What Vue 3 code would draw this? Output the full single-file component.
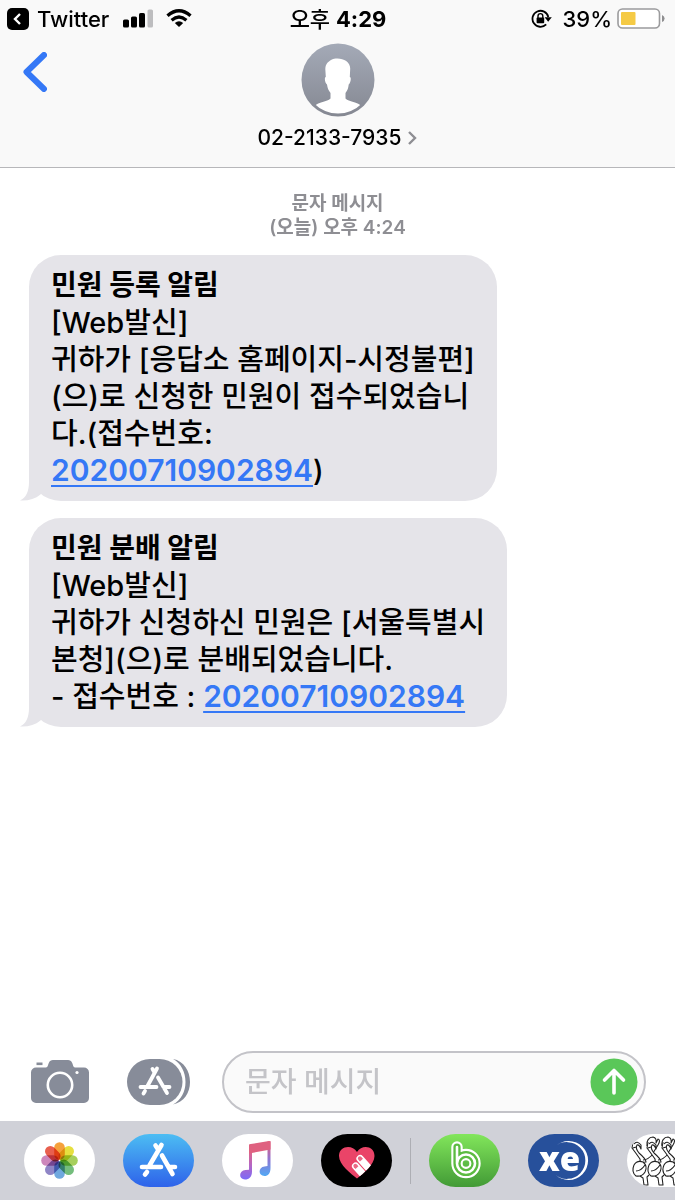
<template>
  <div class="phone">
    <header class="top">
      <div class="status">
        <div class="status-left">
          <a class="return-link" href="#">
            <svg width="22" height="22" viewBox="0 0 22 22" aria-hidden="true">
              <rect width="22" height="22" rx="5" fill="#000" />
              <path d="M13 6L8 11l5 5" fill="none" stroke="#fff" stroke-width="2.4" />
            </svg>
            <span>Twitter</span>
          </a>
          <svg class="signal" width="31" height="19" viewBox="0 0 31 19" aria-hidden="true">
            <rect x="0" y="10.5" width="6" height="8" rx="1.6" />
            <rect x="8" y="7.5" width="6" height="11" rx="1.6" />
            <rect x="16" y="4" width="6" height="14.5" rx="1.6" />
            <rect x="24.5" y="0.5" width="5.5" height="18" rx="1.6" fill="#bdbdbf" />
          </svg>
          <svg width="26" height="19" viewBox="0 0 26 19" fill="none" stroke="#000" aria-hidden="true">
            <path d="M1.5 6.8Q13-3.2 24.5 6.8" stroke-width="3.4" />
            <path d="M5.6 11.2Q13 4.8 20.4 11.2" stroke-width="3.2" />
            <path d="M13 18L8.8 14Q13 10.6 17.2 14Z" fill="#000" stroke="none" />
          </svg>
        </div>
        <time class="clock">오후 <b>4:29</b></time>
        <div class="status-right">
          <svg width="21" height="20" viewBox="0 0 21 20" aria-hidden="true">
            <path d="M15.2 15.4A8 8 0 1 1 17.3 8" fill="none" stroke="#000" stroke-width="1.8" />
            <path d="M13.6 8.2h7.2l-3.6 4.6z" />
            <rect x="5.6" y="8.6" width="7.6" height="5.6" rx="0.8" />
            <path d="M7 9V7a2.400 2.400 0 0 1 4.800 0v2" fill="none" stroke="#000" stroke-width="1.4" />
          </svg>
          <span class="percent">39%</span>
          <svg width="48" height="21" viewBox="0 0 48 21" aria-hidden="true">
            <rect x="1" y="1" width="41.5" height="19" rx="4.5" fill="#fff" stroke="#9b9b9d" stroke-width="1.6" />
            <rect x="4" y="4" width="14.5" height="13" rx="1" fill="#f5ca45" />
            <path d="M45 7q2.600 1 2.600 3.500T45 14z" fill="#8e8e90" />
          </svg>
        </div>
      </div>

      <nav class="nav">
        <button class="back" type="button" aria-label="뒤로">
          <svg width="24" height="40" viewBox="0 0 24 40" aria-hidden="true">
            <path d="M21 3L3.500 20 21 37" fill="none" stroke="#3578f6" stroke-width="6" stroke-linecap="round" stroke-linejoin="round" />
          </svg>
        </button>
        <button class="contact" type="button">
          <svg width="74" height="74" viewBox="0 0 74 74" aria-hidden="true">
            <defs>
              <linearGradient id="avatarBg" x1="0" y1="0" x2="0" y2="1">
                <stop offset="0" stop-color="#a4aab7" />
                <stop offset="1" stop-color="#858892" />
              </linearGradient>
              <clipPath id="avatarClip"><circle cx="37" cy="37" r="33.5" /></clipPath>
            </defs>
            <circle cx="37" cy="37" r="36.5" fill="url(#avatarBg)" />
            <path
              clip-path="url(#avatarClip)"
              fill="#fff"
              d="M36.500 15.500C43 15.500 49.500 19 49.200 26L48.800 34C50.500 34 49.800 40 47.700 41.500C47.300 45 46.500 47.500 44.500 50V55.500C48 59 56 58.500 62 64V74H12V64C18 58.500 26 59 29.500 55.500V50C27.500 47.500 26.500 45 26 41.500C24 40 23 34 24.800 34L24.300 26C24.500 20 28 18.500 30 17C32 15.800 34 15.500 36.500 15.500Z"
            />
          </svg>
          <span class="number">
            02-2133-7935
            <svg width="10" height="14" viewBox="0 0 10 14" aria-hidden="true">
              <path d="M2 1l6 6-6 6" fill="none" stroke="#8e8e93" stroke-width="2.4" />
            </svg>
          </span>
        </button>
      </nav>
    </header>

    <main class="thread">
      <p class="stamp">문자 메시지<br />(오늘) 오후 4:24</p>

      <div class="messages">
        <article v-for="(msg, i) in messages" :key="i" class="bubble">
          <h2 class="subject">{{ msg.subject }}</h2>
          <p v-for="(line, j) in msg.lines" :key="j" class="line">{{ line.before }}<a v-if="line.link" href="#">{{ line.link }}</a>{{ line.after }}</p>
          <svg class="tail" width="24" height="34" viewBox="0 0 24 34" aria-hidden="true">
            <path d="M9 0V15C9 24 6 31 0 33.500C8 34 15 32 20.500 27.500L24 20V0Z" fill="#e5e4e9" />
          </svg>
        </article>
      </div>
    </main>

    <footer>
      <form class="composer" @submit.prevent="draft = ''">
        <button class="tool" type="button" aria-label="카메라">
          <svg width="58" height="44" viewBox="0 0 58 44" aria-hidden="true">
            <path d="M5.500 2.500h6v2.600h-6z" fill="#878c99" />
            <path d="M5 7.500h9c3 0 2.500-1.500 3.800-4.500C18.800.8 20 0 22 0h15c2 0 3.200.8 4.200 3 1.300 3 .8 4.500 3.800 4.500h8a5 5 0 0 1 5 5V38a5 5 0 0 1-5 5H5a5 5 0 0 1-5-5V12.500a5 5 0 0 1 5-5z" fill="#878c99" />
            <circle cx="29" cy="25" r="12.2" fill="none" stroke="#fff" stroke-width="2.6" />
            <circle cx="46" cy="12.5" r="1.6" fill="#fff" />
          </svg>
        </button>
        <button class="tool" type="button" aria-label="앱">
          <svg width="64" height="48" viewBox="0 0 64 48" aria-hidden="true">
            <path d="M46 1C57 3 63 13 63 24S57 44 46 46.500C54 42 58.500 34 58.500 24S54 5.500 46 1z" fill="#878c99" />
            <rect x="0" y="1" width="55.5" height="46" rx="23" fill="#878c99" />
            <path d="M25.500 11l2 3.500M30 10.500L20.500 28M13.500 29h16M36.500 29h6M31 19.500l9 15.500M18 33l-1.500 2.500" fill="none" stroke="#fff" stroke-width="3.8" stroke-linecap="round" />
          </svg>
        </button>
        <div class="field">
          <input v-model="draft" type="text" placeholder="문자 메시지" aria-label="문자 메시지" />
          <button class="send" type="submit" aria-label="보내기">
            <svg width="48" height="48" viewBox="0 0 48 48" aria-hidden="true">
              <circle cx="24" cy="24" r="23.5" fill="#5ac759" />
              <path d="M24 35V13M14.500 22L24 12.500 33.500 22" fill="none" stroke="#fff" stroke-width="3.6" stroke-linecap="round" stroke-linejoin="round" />
            </svg>
          </button>
        </div>
      </form>

      <div class="apps">
        <button class="app white" type="button" aria-label="사진">
          <svg viewBox="0 0 71 53" aria-hidden="true">
            <g class="petals" transform="translate(35.5 26.5)">
              <rect v-for="(c, i) in petals" :key="c" x="-5.3" y="-18.3" width="10.6" height="17.6" rx="5.3" :fill="c" :transform="`rotate(${i * 45})`" />
            </g>
          </svg>
        </button>
        <button class="app store" type="button" aria-label="App Store">
          <svg viewBox="0 0 71 53" aria-hidden="true">
            <path d="M32.500 11.500l3 4.500M38.500 11L26.500 31.500M19 33h19M47 33h5M39 21.500L49.500 40M24 38l-2 2.500" fill="none" stroke="#fff" stroke-width="4.6" stroke-linecap="round" />
          </svg>
        </button>
        <button class="app white" type="button" aria-label="음악">
          <svg viewBox="0 0 71 53" aria-hidden="true">
            <defs>
              <linearGradient id="noteLeft" x1="0" y1="0" x2="0" y2="1">
                <stop offset="0.15" stop-color="#e4637f" />
                <stop offset="0.6" stop-color="#b466c4" />
                <stop offset="1" stop-color="#7c6af8" />
              </linearGradient>
              <linearGradient id="noteRight" x1="0" y1="0" x2="0" y2="1">
                <stop offset="0.1" stop-color="#dc5f80" />
                <stop offset="0.5" stop-color="#9273d0" />
                <stop offset="1" stop-color="#51a9f5" />
              </linearGradient>
            </defs>
            <path d="M27 10.500L30 10V37.500C30 43 27 45.500 23 45.500C16.500 45.500 16.500 36.500 23.500 36L27 35.700Z" fill="url(#noteLeft)" />
            <path d="M45.500 7.500L48.500 7V34C48.500 39.500 46 42 42.500 42C36 42 36 33 42.500 32.500L45.500 32Z" fill="url(#noteRight)" />
            <path d="M27 12Q27 10.300 28.700 10L47 7Q48.500 6.800 48.500 8.500V15.500L27 19.500Z" fill="#df6180" />
          </svg>
        </button>
        <button class="app black" type="button" aria-label="하트">
          <svg viewBox="0 0 71 53" aria-hidden="true">
            <defs>
              <clipPath id="heartClip"><path :d="heart" /></clipPath>
            </defs>
            <path :d="heart" fill="#ea4468" />
            <g clip-path="url(#heartClip)">
              <g v-for="f in fingers" :key="f" :transform="f">
                <rect x="-3.7" y="-3.5" width="7.4" height="28" rx="3.7" fill="#fff" />
                <path d="M-2 2.200V-.2a2 2 0 0 1 4 0V2.200z" fill="#ea6a84" />
              </g>
            </g>
          </svg>
        </button>
        <span class="divider"></span>
        <button class="app green" type="button" aria-label="BAND">
          <svg viewBox="0 0 71 53" fill="none" stroke-linecap="round" aria-hidden="true">
            <path :d="band" stroke="#fff" stroke-width="11.4" />
            <path :d="band" stroke="#5cbb41" stroke-width="7.2" />
            <path :d="band" stroke="#fff" stroke-width="2.6" />
          </svg>
        </button>
        <button class="app navy" type="button" aria-label="XE">
          <svg viewBox="0 0 71 53" aria-hidden="true">
            <path d="M27 12.500A19.500 19.500 0 1 1 27 40.500A18.400 18.400 0 1 0 27 12.500Z" fill="#fff" />
            <text x="11" y="37" class="xe">xe</text>
          </svg>
        </button>
        <button class="app white" type="button" aria-label="스티커">
          <svg viewBox="0 0 71 53" aria-hidden="true">
            <g fill="#fff" stroke="#222" stroke-width="1.1" stroke-linejoin="round">
              <g v-for="n in 4" :key="n" :transform="`translate(${(n - 1) * 15} 0)`">
                <path d="M20 12C19 7 22 3 26 3Q30 4 29 9L31 5Q34 6 31 11L26 19" />
                <path d="M6 8L5 14 8 18 13 25Q14 28 10 29L19 28Q19 25 12 19 8 14 10 11 12 10 14 15L14 11Q10 6 7 10M6 14L9 13" />
                <path d="M16 26Q21 26 27 19" fill="none" />
                <path d="M7 31Q10 26 16 28Q21 32 18 38Q15 43 9 42Q4 38 7 31ZM9 37Q14 37 18 31" />
                <path d="M13 42L16 44 17 51H21L20 43 22 41" fill="none" />
              </g>
            </g>
          </svg>
        </button>
      </div>
    </footer>
  </div>
</template>

<script setup>
import { ref } from 'vue'

const draft = ref('')

const messages = [
  {
    subject: '민원 등록 알림',
    lines: [
      { before: '[Web발신]' },
      { before: '귀하가 [응답소 홈페이지-시정불편]' },
      { before: '(으)로 신청한 민원이 접수되었습니' },
      { before: '다.(접수번호:' },
      { link: '20200710902894', after: ')' }
    ]
  },
  {
    subject: '민원 분배 알림',
    lines: [
      { before: '[Web발신]' },
      { before: '귀하가 신청하신 민원은 [서울특별시' },
      { before: '본청](으)로 분배되었습니다.' },
      { before: '- 접수번호 : ', link: '20200710902894' }
    ]
  }
]

// clockwise from the top petal
const petals = ['#f5a13c', '#e6df3f', '#a6cf5c', '#74bd7c', '#6fa8de', '#8f85c6', '#cd86bb', '#e85f4e']

const heart = 'M36 44.500C30 39.500 18 31 18 22C18 12 31 10 36 18C41 10 53.500 12 53.500 22C53.500 31 42 39.500 36 44.500Z'
const fingers = ['translate(39 24.5) rotate(-42)', 'translate(34.5 32) rotate(-42)']
const band = 'M28 13V29.500a9 9 0 1 0 9-9a9 9 0 0 0-9 9'
</script>

<style>
body {
  background: #fff;
}
</style>

<style scoped>
.phone {
  display: flex;
  flex-direction: column;
  min-height: 100vh;
  color: #000;
  font-family: Inter, "Noto Sans CJK KR", sans-serif;
  font-weight: 500;
}
button {
  padding: 0;
  border: 0;
  background: none;
  color: inherit;
  font: inherit;
  cursor: pointer;
}
svg {
  display: block;
}

.top {
  padding-bottom: 17px;
  border-bottom: 1px solid #b7b7ba;
  background: #f9f9f9;
}
.status {
  display: grid;
  grid-template-columns: 1fr auto 1fr;
  align-items: center;
  height: 37px;
  padding: 0 10px 0 7px;
  font-size: 22px;
  line-height: 24px;
}
.status-left,
.status-right,
.return-link {
  display: flex;
  align-items: center;
}
.return-link {
  gap: 8px;
  color: inherit;
  text-decoration: none;
}
.signal {
  margin: 0 12px 0 14px;
}
.clock {
  padding-left: 4px;
}
.clock b {
  font-weight: 700;
}
.status-right {
  justify-content: flex-end;
}
.percent {
  margin: 0 5px 0 11px;
}

.nav {
  display: grid;
  grid-template-columns: 1fr auto 1fr;
  align-items: start;
  padding: 6px 23px 0;
}
.back {
  justify-self: start;
  margin-top: 9px;
}
.contact {
  display: flex;
  flex-direction: column;
  align-items: center;
  gap: 8px;
}
.number {
  display: flex;
  align-items: center;
  gap: 6px;
  font-size: 21px;
  line-height: 25px;
}

.thread {
  flex: 1;
  display: flex;
  flex-direction: column;
  gap: 15px;
  padding: 24px 29px;
}
.stamp {
  margin: 0;
  color: #8e8e93;
  font-size: 19px;
  font-weight: 600;
  line-height: 24px;
  text-align: center;
}
.messages {
  display: flex;
  flex-direction: column;
  align-items: flex-start;
  gap: 17px;
}
.bubble {
  position: relative;
  padding: 12px 22px;
  border-radius: 32px;
  background: #e5e4e9;
}
.subject,
.line {
  margin: 0;
  font-size: 29px;
  font-weight: 500;
  line-height: 37px;
}
.subject {
  font-size: 28px;
  font-weight: 700;
}
.line a {
  color: #3578f6;
  font-size: 30px;
  font-weight: 600;
  line-height: 30px;
  text-decoration-thickness: 2px;
  text-underline-offset: 4px;
}
.tail {
  position: absolute;
  left: -9px;
  bottom: 0;
}

.composer {
  display: flex;
  align-items: center;
  padding: 10px 29px 8px 31px;
}
.tool {
  flex: none;
  margin-right: 38px;
}
.tool + .tool {
  margin-right: 31px;
}
.field {
  flex: 1;
  display: flex;
  align-items: center;
  min-width: 0;
  height: 62px;
  box-sizing: border-box;
  padding: 0 6px 0 21px;
  border: 2px solid #c3c3c8;
  border-radius: 31px;
  background: #fafafa;
}
.field input {
  flex: 1;
  min-width: 0;
  padding: 0;
  border: 0;
  outline: 0;
  background: none;
  font: inherit;
  font-size: 28px;
}
.field input::placeholder {
  color: #c4c4c8;
}
.send {
  flex: none;
}

.apps {
  display: flex;
  align-items: center;
  gap: 28px;
  height: 79px;
  padding-left: 24px;
  overflow: hidden;
  background: #d0d1d8;
}
.app {
  flex: none;
  width: 71px;
  height: 53px;
  border-radius: 27px;
  overflow: hidden;
}
.divider {
  flex: none;
  width: 1px;
  height: 46px;
  margin: 0 -10px;
  background: #adaeb4;
}
.white {
  background: #fff;
}
.black {
  background: #000;
}
.store {
  background: linear-gradient(#4cbdf3, #2e62ea);
}
.green {
  background: linear-gradient(#82e65b, #429a36);
}
.navy {
  background: #27509b;
}
.petals {
  isolation: isolate;
}
.petals rect {
  mix-blend-mode: multiply;
}
.xe {
  fill: #fff;
  font-family: "Open Sans", sans-serif;
  font-size: 33px;
  font-weight: 800;
}
</style>
